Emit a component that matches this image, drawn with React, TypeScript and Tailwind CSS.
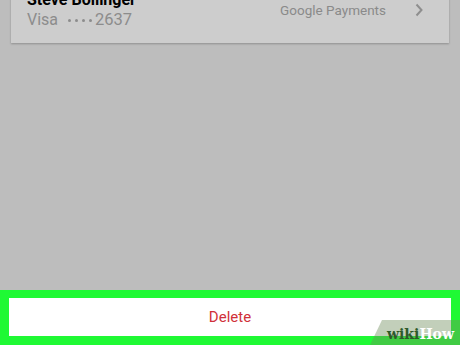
export default function App() {
  return (
    <div className="relative w-[460px] h-[345px] overflow-hidden bg-[#bdbdbd] flex flex-col font-['Roboto',sans-serif]">
      <div className="px-[11px] mt-[-22px]">
        <div className="bg-[#cdcdcd] shadow-[0_1px_2px_rgba(0,0,0,0.25)] flex items-center pl-[16px] pr-[26px] pt-[12px] pb-[13px]">
          <div className="flex-1 flex flex-col">
            <span className="text-[16px] leading-[20px] font-bold text-black">Steve Bollinger</span>
            <span className="text-[16px] leading-[20px] text-[#8c8c8c] flex items-center">
              Visa
              <span className="ml-[10px] mr-[3px] flex gap-[4px]">
                <span className="w-[3px] h-[3px] rounded-full bg-[#8c8c8c]" />
                <span className="w-[3px] h-[3px] rounded-full bg-[#8c8c8c]" />
                <span className="w-[3px] h-[3px] rounded-full bg-[#8c8c8c]" />
                <span className="w-[3px] h-[3px] rounded-full bg-[#8c8c8c]" />
              </span>
              <span className="text-[16.5px]">2637</span>
            </span>
          </div>
          <span className="text-[13.5px] text-[#8a8a8a]">Google Payments</span>
          <svg className="ml-[29px] w-[8px] h-[14px]" viewBox="0 0 8 14" fill="none" stroke="#8e8e8e" strokeWidth="2">
            <path d="M1.5 1.5L6.5 7L1.5 12.5" />
          </svg>
        </div>
      </div>
      <div className="flex-1" />
      <div className="h-[55px] bg-[#1ff934] px-[9px] pt-[8px] pb-[9px]">
        <div className="h-full bg-white flex items-center justify-center text-[15px] text-[#d0303a]">
          Delete
        </div>
      </div>
      <div className="absolute right-0 bottom-0 w-[90px] h-[25px] bg-[rgba(110,140,90,0.42)] [clip-path:polygon(12px_0,100%_0,100%_100%,0_100%)] flex items-center justify-end pr-[6px] pt-[2px] font-['DejaVu_Serif',serif] font-bold text-[14px] leading-none">
        <span className="text-[#2e5a2a]">wiki</span>
        <span className="text-white">How</span>
      </div>
    </div>
  );
}
